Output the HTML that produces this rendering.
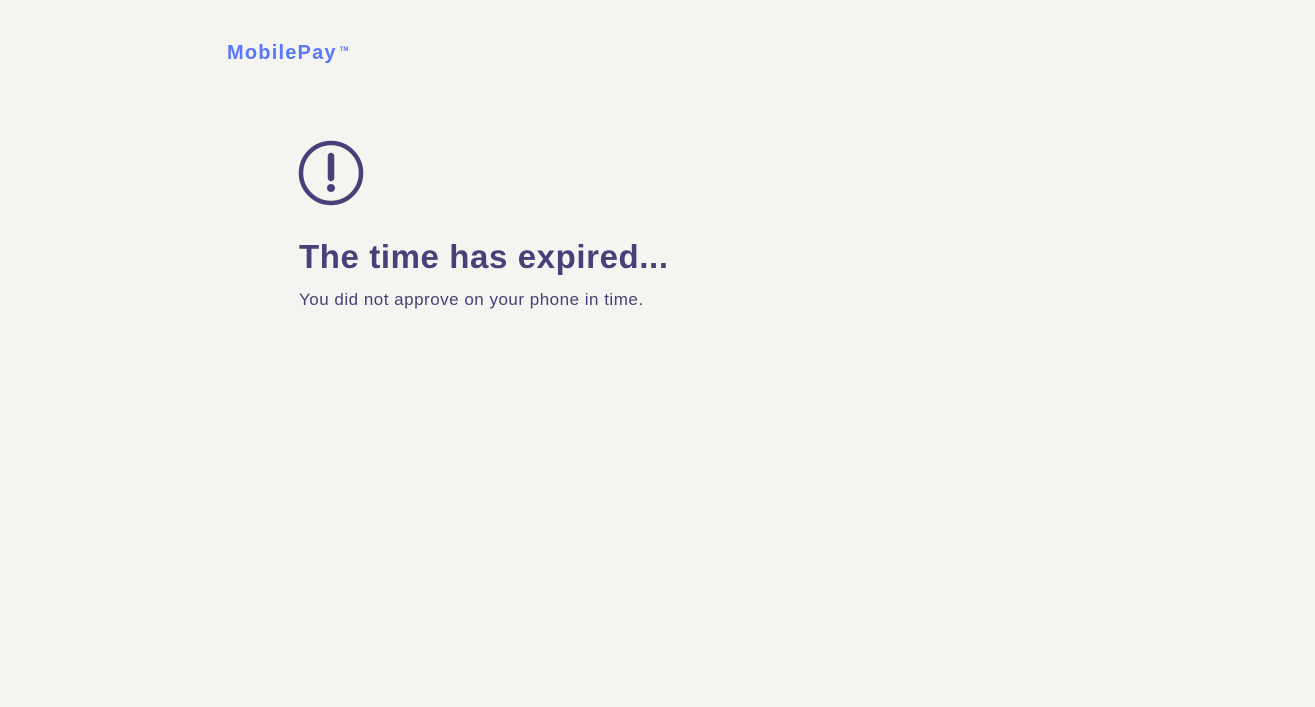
<!DOCTYPE html>
<html><head><meta charset="utf-8"><style>
body{margin:0;background:#f4f4f0;width:1315px;height:707px;overflow:hidden;font-family:"Liberation Sans",sans-serif;}
.logo{position:absolute;left:227px;top:42px;color:#5a78ff;font-weight:bold;font-size:20px;letter-spacing:1.2px;}
.logo sup{font-size:6px;margin-left:3px;vertical-align:8px;letter-spacing:0;}
svg{position:absolute;left:297px;top:139px;}
h1{position:absolute;left:299px;top:238px;margin:0;font-size:33px;font-weight:bold;color:#4a3f78;letter-spacing:0.6px;}
p{position:absolute;left:299px;top:290px;margin:0;font-size:17px;color:#4a3f78;letter-spacing:0.5px;}
</style></head><body>
<div class="logo">MobilePay<sup>TM</sup></div>
<svg width="68" height="68" viewBox="0 0 68 68"><circle cx="34" cy="34" r="30" fill="none" stroke="#4a3f78" stroke-width="4.5"/><path d="M34 17 V39" stroke="#4a3f78" stroke-width="6.5" stroke-linecap="round"/><circle cx="34" cy="49" r="4" fill="#4a3f78"/></svg>
<h1>The time has expired...</h1>
<p>You did not approve on your phone in time.</p>
</body></html>
